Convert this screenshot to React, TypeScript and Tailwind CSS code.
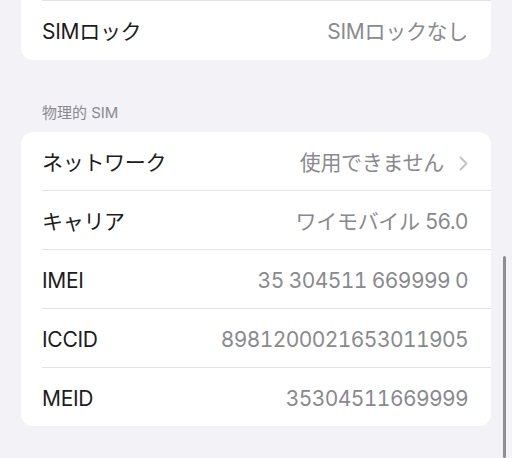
import React from "react";

const font = { fontFamily: 'Inter, "Noto Sans CJK JP", sans-serif' };

function Row({ label, value, chevron, last, numeric }: { label: string; value: string; chevron?: boolean; last?: boolean; numeric?: boolean }) {
  return (
    <div className="pl-[21px]">
      <div className="flex h-[58px] items-center justify-between pr-[23px] pt-[4px]">
        <span className="text-[21px] text-[#1c1c1e] tracking-[-0.3px]">{label}</span>
        <span
          className={
            numeric
              ? "flex items-center text-[21px] text-[#8a8a8e] tracking-[-0.6px] tabular-nums"
              : "flex items-center text-[21px] text-[#8a8a8e] tracking-[-0.3px]"
          }
        >
          {value}
          {chevron && (
            <svg width="9" height="15" viewBox="0 0 9 15" className="ml-[15px]">
              <path d="M1.5 1.5 L7.5 7.5 L1.5 13.5" fill="none" stroke="#c4c4c8" strokeWidth="2" strokeLinecap="round" strokeLinejoin="round" />
            </svg>
          )}
        </span>
      </div>
      {!last && <div className="h-px bg-[#e3e3e6]" />}
    </div>
  );
}

export default function App() {
  return (
    <div className="relative h-[458px] w-[512px] overflow-hidden bg-[#f2f2f7]" style={font}>
      <div className="mx-[21px] rounded-b-[12px] bg-white">
        <div className="ml-[21px] h-px bg-[#e3e3e6]" />
        <div className="pl-[21px] flex h-[59px] items-center justify-between pr-[23px] pt-[3px]">
          <span className="text-[21px] text-[#1c1c1e] tracking-[-0.3px]">SIMロック</span>
          <span className="text-[21px] text-[#8a8a8e] tracking-[-0.3px]">SIMロックなし</span>
        </div>
      </div>
      <div className="pl-[42px] pt-[44px] pb-[10px] text-[15px] leading-[18px] text-[#8a8a8e]">物理的 SIM</div>
      <div className="mx-[21px] rounded-[12px] bg-white">
        <Row label="ネットワーク" value="使用できません" chevron />
        <Row label="キャリア" value="ワイモバイル 56.0" />
        <Row label="IMEI" value="35 304511 669999 0" numeric />
        <Row label="ICCID" value="8981200021653011905" numeric />
        <Row label="MEID" value="35304511669999" numeric last />
      </div>
      <div className="absolute left-[503px] top-[256px] h-[202px] w-[3px] rounded-full bg-[#8e8e92]" />
    </div>
  );
}
